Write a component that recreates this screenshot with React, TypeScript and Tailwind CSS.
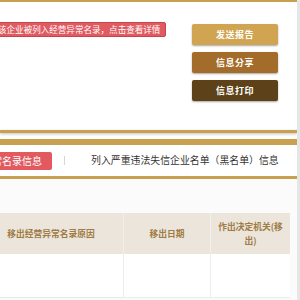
import React from "react";

const font = { fontFamily: '"Noto Sans CJK SC", "Noto Sans", sans-serif' };

const ActionButton = ({ label, tone }: { label: string; tone: string }) => (
  <button
    className={`w-[86px] h-[21px] rounded-[2px] text-white text-[9px] font-semibold tracking-[0.5px] shadow-[0_1px_2px_rgba(0,0,0,0.35)] ${tone}`}
  >
    {label}
  </button>
);

const App = () => {
  return (
    <div className="w-[300px] h-[300px] overflow-hidden flex bg-[#e6e6e6]" style={font}>
      <div className="w-[297px] h-full bg-white flex flex-col overflow-hidden">
        <div className="h-[2px] bg-[#c9a04f] shrink-0" />

        {/* notice + actions */}
        <div className="flex justify-between h-[128px] shrink-0">
          <div className="pt-[20px]">
            <div className="-ml-[6px] h-[15px] pl-[3px] pr-[5px] flex items-center rounded-[2px] bg-[#e05a61] border border-[#c9434b] text-white text-[8.55px] leading-none whitespace-nowrap">
              该企业被列入经营异常名录，点击查看详情
            </div>
          </div>
          <div className="flex flex-col gap-[7px] pt-[22px] pr-[19px]">
            <ActionButton label="发送报告" tone="bg-[#d0a450]" />
            <ActionButton label="信息分享" tone="bg-[#a46c2a]" />
            <ActionButton label="信息打印" tone="bg-[#5d4219]" />
          </div>
        </div>

        <div className="h-[3px] bg-[#c9a04f] shadow-[0_1px_3px_rgba(0,0,0,0.25)] shrink-0" />
        <div className="h-[6px] shrink-0" />
        <div className="h-[6px] bg-[#c9a04f] shrink-0" />

        {/* tabs */}
        <div className="h-[31px] flex items-center shrink-0">
          <div className="-ml-[48px] h-[18px] pl-[10px] pr-[10px] flex items-center rounded-[2px] bg-[#e25a60] text-white text-[10px] whitespace-nowrap">
            经营异常名录信息
          </div>
          <div className="ml-[12px] w-px h-[9px] bg-[#d6d6d6]" />
          <div className="ml-[26px] text-[9.9px] text-[#333] whitespace-nowrap">
            列入严重违法失信企业名单（黑名单）信息
          </div>
        </div>
        <div className="h-[3px] bg-[#c9a04f] shrink-0" />

        {/* table */}
        <div className="flex-1 bg-[#fbfbfb] pt-[34px] pr-[7px]">
          <div className="-ml-[21px] grid grid-cols-[144px_87px_80px] text-[8.75px] font-semibold text-[#a07b44]">
            <div className="h-[41px] bg-[#ebe5dc] flex items-center justify-center">移出经营异常名录原因</div>
            <div className="h-[41px] bg-[#ebe5dc] border-l border-[#f3efe8] flex items-center justify-center">移出日期</div>
            <div className="h-[41px] bg-[#ebe5dc] border-l border-[#f3efe8] flex items-center justify-center text-center leading-[14px] whitespace-nowrap">
              作出决定机关(移
              <br />
              出)
            </div>
            <div className="h-[44px] bg-white border-b border-[#e8e8e8]" />
            <div className="h-[44px] bg-white border-l border-b border-[#ececec]" />
            <div className="h-[44px] bg-white border-l border-b border-[#ececec]" />
          </div>
        </div>
      </div>
    </div>
  );
};

export default App;
